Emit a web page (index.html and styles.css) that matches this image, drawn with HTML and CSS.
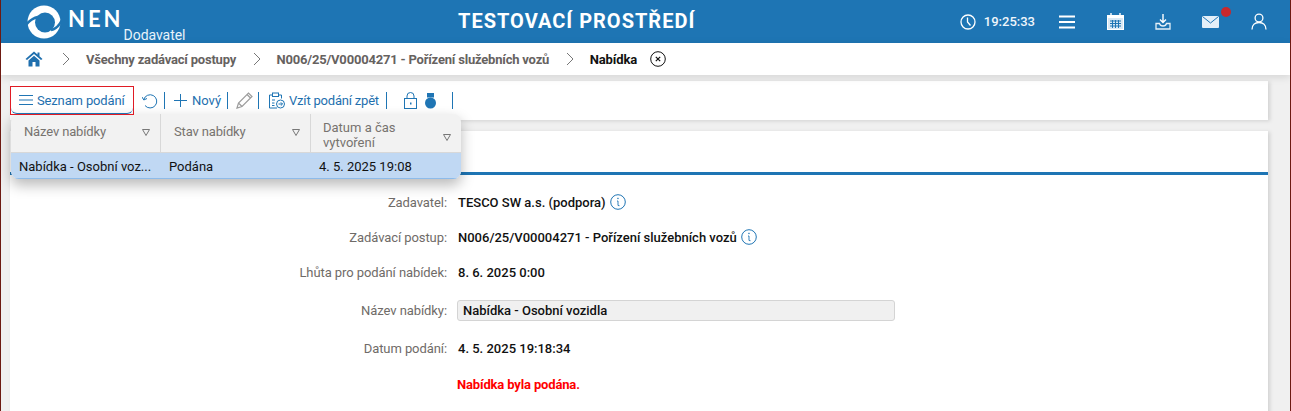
FILE: index.html
```html
<!DOCTYPE html>
<html lang="cs">
<head>
<meta charset="utf-8">
<title>NEN</title>
<link rel="stylesheet" href="styles.css">
</head>
<body>
<div class="app">
  <header class="topbar">
    <div class="brand">
      <svg class="logo" width="34" height="34" viewBox="0 0 34 34"><circle cx="17" cy="17" r="16.500" fill="#fff"/><circle cx="18" cy="17.500" r="10" fill="#1e75b4"/><path d="M-1 20C2 16 6 13 11 12" fill="none" stroke="#1e75b4" stroke-width="2.500"/><path d="M35 15C33 19 29 24 24 25" fill="none" stroke="#1e75b4" stroke-width="2.500"/></svg>
      <span class="nen">NEN</span>
      <span class="role">Dodavatel</span>
    </div>
    <div class="env">TESTOVACÍ PROSTŘEDÍ</div>
    <div class="tools">
      <svg class="clock" width="16" height="16" viewBox="0 0 16 16"><circle cx="8" cy="8" r="7" fill="none" stroke="#fff" stroke-width="1.300"/><path d="M7.500 3.500V8L10.500 11.500" fill="none" stroke="#fff" stroke-width="1.300"/></svg>
      <span class="time">19:25:33</span>
      <svg class="t-menu" width="16" height="14" viewBox="0 0 16 14"><path d="M0 1.500H16M0 7H16M0 12.500H16" stroke="#fff" stroke-width="2"/></svg>
      <svg class="t-cal" width="17" height="17" viewBox="0 0 17 17"><rect x="0.500" y="2.500" width="16" height="14" fill="#d8e8f4" stroke="#fff"/><path d="M4 0V3M13 0V3" stroke="#fff" stroke-width="1.400"/><rect x="0" y="2" width="17" height="3" fill="#fff"/><path d="M3 8H14M3 10.500H14M3 13H14M5.500 7V15M8.500 7V15M11.500 7V15" stroke="#1f75b4" stroke-width="1"/></svg>
      <svg class="t-down" width="16" height="16" viewBox="0 0 16 16"><path d="M8 0V8M5 5.500L8 8.500L11 5.500" fill="none" stroke="#fff" stroke-width="1.400"/><path d="M1 9.500H4.500C5 11.500 6 12 8 12C10 12 11 11.500 11.500 9.500H15V15H1Z" fill="none" stroke="#e5f0f8" stroke-width="1.300"/></svg>
      <span class="mail">
        <svg width="17" height="12" viewBox="0 0 17 12"><rect width="17" height="12" rx="1" fill="#e4eff8"/><path d="M0.500 0.500L8.500 7L16.500 0.500" fill="none" stroke="#1f75b4"/></svg>
        <i class="dot"></i>
      </span>
      <svg class="t-user" width="16" height="17" viewBox="0 0 16 17"><circle cx="8" cy="5" r="3.900" fill="none" stroke="#fff" stroke-width="1.300"/><path d="M1 16.500C1 12 4 9.500 8 9.500C12 9.500 15 12 15 16.500" fill="none" stroke="#fff" stroke-width="1.300"/></svg>
    </div>
  </header>

  <nav class="crumbs">
    <svg class="home" width="18" height="16" viewBox="0 0 18 16"><path d="M9 0.500L0.500 8L2 9L9 3L16 9L17.500 8L14.500 5.300V1.500H12.500V3.500Z" fill="#1f6fae"/><path d="M3.500 9.500L9 4.800L14.500 9.500V15.500H10.500V11H7.500V15.500H3.500Z" fill="#1f6fae"/></svg>
    <svg class="chev" width="8" height="14" viewBox="0 0 8 14"><path d="M1 1L7 7L1 13" fill="none" stroke="#777"/></svg>
    <span class="crumb">Všechny zadávací postupy</span>
    <svg class="chev" width="8" height="14" viewBox="0 0 8 14"><path d="M1 1L7 7L1 13" fill="none" stroke="#777"/></svg>
    <span class="crumb">N006/25/V00004271 - Pořízení služebních vozů</span>
    <svg class="chev" width="8" height="14" viewBox="0 0 8 14"><path d="M1 1L7 7L1 13" fill="none" stroke="#777"/></svg>
    <span class="crumb current">Nabídka</span>
    <svg class="close" width="16" height="16" viewBox="0 0 16 16"><circle cx="8" cy="8" r="7.300" fill="none" stroke="#111"/><path d="M5.800 5.800L10.200 10.200M10.200 5.800L5.800 10.200" stroke="#111" stroke-width="1.200"/></svg>
  </nav>

  <main class="content">
    <section class="toolbar">
      <button class="list-btn">
        <svg width="14" height="10" viewBox="0 0 14 10"><path d="M0 .5H14M0 5H14M0 9.500H14" stroke="#1f75b4"/></svg>
        <span>Seznam podání</span>
      </button>
      <svg class="ic-undo" width="16" height="16" viewBox="0 0 16 16"><path d="M1.800 6.500A6.600 6.600 0 1 1 3 12.500M0 4L1.800 7L5 5.500" fill="none" stroke="#1f75b4"/></svg>
      <i class="sep"></i>
      <svg class="ic-plus" width="13" height="13" viewBox="0 0 13 13"><path d="M6.500 0V13M0 6.500H13" stroke="#1f75b4"/></svg>
      <span class="tool-text new">Nový</span>
      <i class="sep"></i>
      <svg class="ic-pen" width="17" height="17" viewBox="0 0 17 17"><path d="M1 16L2.500 11L12.500 1L16 4.500L6 14.500ZM2.500 11L6 14.500M11 2.500L14.500 6" fill="none" stroke="#9c9c9c" stroke-width="1.200"/></svg>
      <i class="sep"></i>
      <svg class="ic-clip" width="17" height="17" viewBox="0 0 17 17"><path d="M9 16H1.500V3H4M11 3H13.500V6.500" fill="none" stroke="#1f75b4"/><rect x="4.500" y="1" width="6" height="3.500" fill="none" stroke="#1f75b4"/><path d="M4 8H7M4 11H6.500M4 13.500H6.500" stroke="#1f75b4"/><circle cx="12.500" cy="12" r="4" fill="none" stroke="#1f75b4"/><path d="M10.500 12H14.500M12.800 10.300L14.500 12L12.800 13.700" fill="none" stroke="#1f75b4"/></svg>
      <span class="tool-text back">Vzít podání zpět</span>
      <i class="sep"></i>
      <svg class="ic-lock" width="13" height="17" viewBox="0 0 13 17"><rect x="0.500" y="6.500" width="12" height="10" fill="none" stroke="#1f75b4"/><path d="M3 6.500V4A3.500 3.500 0 0 1 10 4V6.500" fill="none" stroke="#1f75b4"/><rect x="6" y="10.500" width="1.500" height="2" fill="#1f75b4"/></svg>
      <svg class="ic-seal" width="13" height="16" viewBox="0 0 13 16"><rect x="3" y="0" width="7" height="4.500" fill="#1f75b4"/><circle cx="6.500" cy="10" r="5.500" fill="#1f75b4"/></svg>
      <i class="sep last"></i>
    </section>

    <section class="detail">
      <div class="tab-strip"></div>
      <div class="rows">
        <div class="row r-a"><span class="lbl">Zadavatel:</span><b class="val">TESCO SW a.s. (podpora)</b><svg class="info" width="16" height="16" viewBox="0 0 16 16"><circle cx="8" cy="8" r="7.300" fill="none" stroke="#1f75b4"/><rect x="7.300" y="3.800" width="1.300" height="1.300" fill="#1f75b4"/><path d="M7 7H8V11.500L9.500 11.700" fill="none" stroke="#1f75b4" stroke-width=".9"/></svg></div>
        <div class="row r-b"><span class="lbl">Zadávací postup:</span><b class="val">N006/25/V00004271 - Pořízení služebních vozů</b><svg class="info" width="16" height="16" viewBox="0 0 16 16"><circle cx="8" cy="8" r="7.300" fill="none" stroke="#1f75b4"/><rect x="7.300" y="3.800" width="1.300" height="1.300" fill="#1f75b4"/><path d="M7 7H8V11.500L9.500 11.700" fill="none" stroke="#1f75b4" stroke-width=".9"/></svg></div>
        <div class="row r-c"><span class="lbl">Lhůta pro podání nabídek:</span><b class="val">8. 6. 2025 0:00</b></div>
        <div class="row r-d"><span class="lbl">Název nabídky:</span><div class="field">Nabídka - Osobní vozidla</div></div>
        <div class="row r-e"><span class="lbl">Datum podání:</span><b class="val">4. 5. 2025 19:18:34</b></div>
        <div class="row r-f"><span class="lbl"></span><b class="val red">Nabídka byla podána.</b></div>
      </div>
    </section>
  </main>

  <div class="dropdown">
    <div class="dd-head">
      <div class="dd-th"><span>Název nabídky</span><svg width="8" height="7" viewBox="0 0 8 7"><path d="M.500.500H7.500L4 6.500Z" fill="none" stroke="#777"/></svg></div>
      <div class="dd-th"><span>Stav nabídky</span><svg width="8" height="7" viewBox="0 0 8 7"><path d="M.500.500H7.500L4 6.500Z" fill="none" stroke="#777"/></svg></div>
      <div class="dd-th wide"><span>Datum a čas<br>vytvoření</span><svg class="low" width="8" height="7" viewBox="0 0 8 7"><path d="M.500.500H7.500L4 6.500Z" fill="none" stroke="#777"/></svg></div>
    </div>
    <div class="dd-row">
      <span class="c1">Nabídka - Osobní voz...</span>
      <span class="c2">Podána</span>
      <span class="c3">4. 5. 2025 19:08</span>
    </div>
  </div>
  <div class="focus-box"></div>
</div>
</body>
</html>
```
FILE: styles.css
```css
* { box-sizing: border-box; }
html, body { margin: 0; height: 100%; overflow: hidden; }
body {
  font-family: Roboto, "Liberation Sans", sans-serif;
  font-size: 13px;
  background: #f0f0f0;
}
.app {
  position: relative;
  height: 411px;
  border-left: 1px solid #6d1a12;
  border-right: 1px solid #6d1a12;
  overflow: hidden;
}
.topbar {
  height: 43px;
  background: #1e75b4;
  color: #fff;
  display: flex;
  align-items: center;
  position: relative;
}
.brand { display: flex; align-items: flex-start; height: 43px; padding: 5px 0 0 26px; }
.nen {
  font-size: 22px;
  font-weight: 700;
  letter-spacing: 3px;
  line-height: 27px;
  margin-left: 7px;
  font-family: Lato, Roboto, sans-serif;
}
.role { font-size: 14px; line-height: 16px; margin: 22px 0 0 0; color: #e8f3fb; letter-spacing: -.05px; }
.env {
  position: absolute;
  left: 457px;
  top: 9px;
  font-size: 20px;
  font-weight: 700;
  line-height: 24px;
  letter-spacing: 1px;
}
.tools { margin-left: auto; display: flex; align-items: center; padding-right: 23px; }
.time { margin-left: 8px; font-size: 13px; font-weight: 500; color: #f0f6fb; }
.t-menu { margin-left: 24px; }
.t-cal { margin-left: 32px; }
.t-down { margin-left: 31px; }
.mail { margin-left: 31px; position: relative; display: flex; }
.dot {
  position: absolute;
  left: 19px;
  top: -9px;
  width: 10px;
  height: 10px;
  border-radius: 50%;
  background: #c9282d;
}
.t-user { margin-left: 32px; }
.crumbs {
  height: 32px;
  background: #fff;
  display: flex;
  align-items: center;
  padding-left: 24px;
  box-shadow: 0 2px 8px rgba(0,0,0,.12);
  position: relative;
}
.chev { margin-left: 16.500px; }
.home + .chev { margin-left: 19px; }
.crumb { font-weight: 700; color: #66625f; margin-left: 16px; letter-spacing: -.2px; }
.current { color: #111; letter-spacing: -.1px; }
.close { margin-left: 13px; }
.content { padding: 6px 22px 0 9px; }
.toolbar {
  height: 39px;
  background: #fff;
  display: flex;
  align-items: center;
  padding: 0 0 0 8px;
  box-shadow: 2px 1px 4px rgba(0,0,0,.13);
  color: #1e75b4;
}
.list-btn {
  width: 116px;
  height: 23px;
  border: 0;
  padding: 0 0 0 1px;
  background: none;
  color: #1e6fae;
  font: inherit;
  letter-spacing: -.15px;
  display: flex;
  align-items: center;
  gap: 4px;
  margin-top: -1px;
  flex: none;
}
.ic-undo { margin-left: 8px; }
.sep { width: 1px; height: 17px; background: #1e75b4; margin: 0 9px 0 6px; flex: none; }
.tool-text { color: #1e6fae; }
.new { margin-left: 5px; }
.back { margin: 0 1px 0 4px; letter-spacing: -.2px; }
.ic-pen { margin-right: -1px; margin-left: -1px; }
.ic-lock { margin-left: 8px; }
.ic-seal { margin-left: 7px; }
.last { margin-left: 15px; }
.detail { margin-top: 11px; background: #fff; height: 290px; box-shadow: 2px 1px 4px rgba(0,0,0,.13); }
.tab-strip { height: 44px; border-bottom: 3px solid #1e75b4; }
.rows { padding-top: 17px; }
.row { display: flex; align-items: center; }
.lbl { width: 437px; text-align: right; color: #6f6b68; margin-right: 11px; flex: none; letter-spacing: -.08px; }
.val { font-weight: 500; color: #111; }
.info { margin-left: 4px; }
.r-a { height: 20px; margin-bottom: 15px; }
.r-b { height: 20px; margin-bottom: 15px; }
.r-c { height: 20px; margin-bottom: 17px; }
.r-d { height: 22px; margin-bottom: 17px; }
.r-e { height: 20px; margin-bottom: 16px; }
.r-f { height: 20px; }
.field {
  width: 438px;
  height: 21px;
  margin-left: -1px;
  padding-left: 5px;
  line-height: 19px;
  background: #f0f0f0;
  border: 1px solid #d4d4d4;
  border-radius: 3px;
  font-weight: 500;
  color: #111;
}
.red { color: #f00; font-weight: 700; letter-spacing: -.15px; margin-left: -1px; }
.focus-box {
  position: absolute;
  left: 9px;
  top: 86px;
  width: 124px;
  height: 29px;
  border: 1px solid #e01b24;
  background: transparent;
}
.focus-box::after {
  content: "";
  position: absolute;
  inset: 0;
  border-bottom: 1px solid #1e75b4;
  border-radius: 0 0 6px 6px;
}
.dropdown {
  position: absolute;
  left: 10px;
  top: 114px;
  width: 450px;
  height: 65px;
  background: #f2f2f2;
  border-radius: 8px;
  overflow: hidden;
  box-shadow: 0 6px 14px rgba(0,0,0,.28);
}
.dd-head { height: 39px; display: flex; border-bottom: 1px solid #d8d8d8; }
.dd-th {
  width: 150px;
  display: flex;
  align-items: center;
  justify-content: space-between;
  padding: 0 10px 2px 13px;
  color: #77736f;
  border-right: 1px solid #d8d8d8;
  line-height: 16px;
  letter-spacing: -.15px;
}
.wide { border-right: 0; padding: 4px 10px 0 12px; letter-spacing: 0; line-height: 15px; }
.low { margin-top: 4px; }
.dd-row {
  height: 26px;
  display: flex;
  align-items: center;
  padding-top: 2px;
  background: #c0d8f3;
  border-bottom: 1px solid #8dbbea;
  color: #111;
}
.dd-row span { display: block; white-space: nowrap; }
.c1 { width: 158px; padding-left: 8px; }
.c2 { width: 150px; }
```
